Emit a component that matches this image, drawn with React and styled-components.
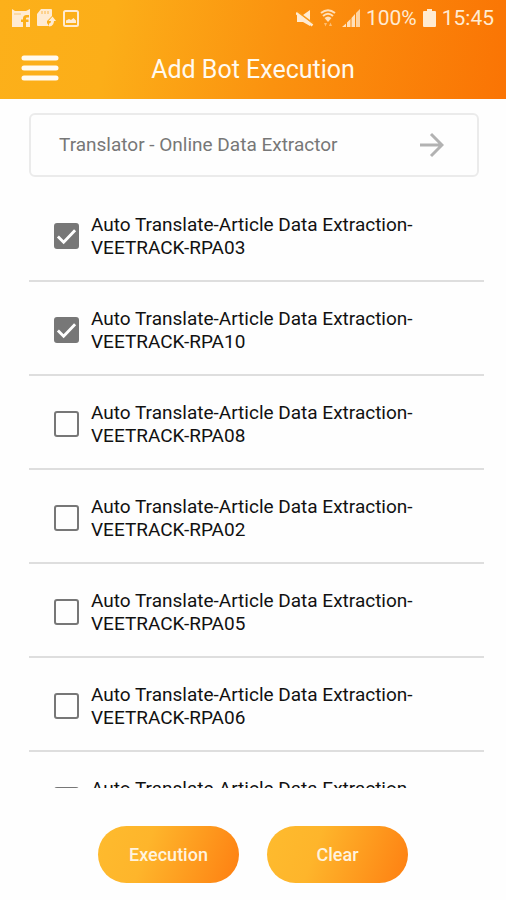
import React, { Component } from 'react'
import styled, { createGlobalStyle } from 'styled-components'

const GlobalStyle = createGlobalStyle`
  * {
    box-sizing: border-box;
  }
  body {
    margin: 0;
    background: #fefefe;
    font-family: Roboto, "Liberation Sans", sans-serif;
  }
  button, input {
    font-family: inherit;
  }
`

const Screen = styled.div`
  display: flex;
  flex-direction: column;
  height: 100vh;
`

const Header = styled.header`
  flex: none;
  background: linear-gradient(100deg, #fcb01a 0%, #fcae18 22%, #fb920f 55%, #fa7404 100%);
`

const StatusBar = styled.div`
  display: flex;
  align-items: center;
  justify-content: space-between;
  height: 36px;
  padding: 0 12px;
  color: #ffebd2;
  font-size: 21px;
  line-height: 24px;
`

const StatusGroup = styled.div`
  display: flex;
  align-items: center;
  gap: ${props => props.$gap}px;
`

const TitleBar = styled.div`
  display: grid;
  grid-template-columns: 60px 1fr 60px;
  align-items: center;
  height: 63px;
`

const MenuButton = styled.button`
  display: flex;
  padding: 0 0 0 21px;
  border: 0;
  background: none;
  cursor: pointer;
`

const Title = styled.h1`
  margin: 0;
  padding-top: 4px;
  color: #fffaf0;
  font-size: 25px;
  font-weight: 400;
  line-height: 32px;
  text-align: center;
`

const BotPicker = styled.button`
  display: flex;
  flex: none;
  align-items: center;
  justify-content: space-between;
  height: 64px;
  margin: 14px 27px 0 29px;
  padding: 0 33px 0 28px;
  border: 2px solid #ebebeb;
  border-radius: 6px;
  background: #fefefe;
  color: #777;
  font-size: 19px;
  line-height: 24px;
  cursor: pointer;
`

const BotList = styled.ul`
  flex: 1;
  min-height: 0;
  margin: 11px 22px 0 29px;
  padding: 0;
  overflow-y: auto;
  scrollbar-width: none;
  list-style: none;
`

const BotRow = styled.li`
  height: 94px;
  border-bottom: 2px solid #dedede;
`

const BotLabel = styled.label`
  display: flex;
  align-items: center;
  gap: 12px;
  height: 100%;
  padding: 4px 60px 0 25px;
  color: #111;
  font-size: 19px;
  line-height: 23px;
  cursor: pointer;
`

const Checkbox = styled.input`
  appearance: none;
  flex: none;
  width: 25px;
  height: 26px;
  margin: 0;
  border: 2px solid #777;
  border-radius: 3px;
  cursor: pointer;

  &:checked {
    background: #777
      url("data:image/svg+xml,%3Csvg xmlns='http://www.w3.org/2000/svg' viewBox='0 0 22 22'%3E%3Cpath d='M2 11 8 17 20 4.5' fill='none' stroke='white' stroke-width='3'/%3E%3C/svg%3E")
      center / 100% no-repeat;
  }
`

const Footer = styled.footer`
  display: flex;
  flex: none;
  justify-content: center;
  gap: 28px;
  padding: 38px 0 17px;
`

const ActionButton = styled.button`
  width: 141px;
  height: 57px;
  border: 0;
  border-radius: 29px;
  background: linear-gradient(110deg, #febb2e 0%, #feb52b 35%, #fe9a1e 68%, #fe7f12 100%);
  color: #fff3df;
  font-size: 18px;
  font-weight: 500;
  cursor: pointer;
`

const FlipboardIcon = () => (
  <svg width="18" height="18" viewBox="0 0 18 18" aria-hidden="true">
    <path
      fill="#ffebd2"
      fillRule="evenodd"
      d="M0 0 3 2H14L18 0V18H14V13H16.5V10.500H14V9.500Q14 8.500 15 8.500H17V6H14.500Q11 6 11 9.500V10.500H9V13H11V18H0Z"
    />
    <path d="M2 5H9" stroke="#fbc873" strokeWidth="1" />
  </svg>
)

const SdCardIcon = () => (
  <svg width="19" height="18" viewBox="0 0 19 18" aria-hidden="true">
    <path fill="#ffebd2" d="M4 0H14Q15 0 15 1V7L10 12V14L12 17H1Q0 17 0 16V5Z" />
    <path d="M5 2V5M8 2V5M11 2V5" stroke="#fbb84a" strokeWidth="1" />
    <path d="M12 16Q16 16 15.500 10" fill="none" stroke="#ffebd2" strokeWidth="3" />
    <path d="M11.500 12 15.500 7.500 19 12Z" fill="#ffebd2" />
  </svg>
)

const ImageIcon = () => (
  <svg width="16" height="17" viewBox="0 0 16 17" aria-hidden="true">
    <rect x="1" y="1" width="14" height="15" rx="1.5" fill="none" stroke="#ffebd2" strokeWidth="2" />
    <path fill="#ffebd2" d="M3 13V10.500L6 9 8 10 10.500 8 13 10.500V13Z" />
  </svg>
)

const MutedIcon = () => (
  <svg width="18" height="17" viewBox="0 0 18 17" aria-hidden="true">
    <path fill="#ffebd2" d="M1 5H7L14 0V16L7 12H1Z" />
    <path d="M1 1.500 17 13.500" stroke="#fa9a18" strokeWidth="2" />
    <path d="M0 3 16.500 15.500" stroke="#ffebd2" strokeWidth="2.5" />
  </svg>
)

const WifiIcon = () => (
  <svg width="16" height="18" viewBox="0 0 16 18" aria-hidden="true">
    <g fill="none" stroke="#ffdfb8" strokeWidth="2">
      <path d="M1 4Q8 -1.500 15 4" />
      <path d="M3 7Q8 2.500 13 7" />
    </g>
    <path fill="#ffdfb8" d="M4.500 9Q8 6 11.500 9L8 13Z" />
    <path fill="#ffdfb8" fillOpacity="0.6" d="M4 14H7L5.500 17.500ZM9 17H12L10.500 13.500Z" />
  </svg>
)

const SignalIcon = () => (
  <svg width="18" height="18" viewBox="0 0 18 18" aria-hidden="true">
    <g fill="#ffe0bb">
      <path d="M0 18 4 14.500V18ZM5 13.500 8.500 10V18H5ZM9.500 9 13 5V18H9.500Z" />
      <path d="M14 4 18 0V18H14Z" fillOpacity="0.85" />
    </g>
  </svg>
)

const BatteryIcon = () => (
  <svg width="13" height="18" viewBox="0 0 13 18" aria-hidden="true">
    <path fill="#ffebd2" d="M4 0H9V2H12Q13 2 13 3V17Q13 18 12 18H1Q0 18 0 17V3Q0 2 1 2H4Z" />
  </svg>
)

const MenuIcon = () => (
  <svg width="38" height="26" viewBox="0 0 38 26" aria-hidden="true">
    <path d="M3 3H35M3 13H35M3 23H35" stroke="#fffaf0" strokeWidth="5" strokeLinecap="round" />
  </svg>
)

const ArrowIcon = () => (
  <svg width="25" height="26" viewBox="0 0 25 26" aria-hidden="true">
    <path d="M1 13H22M12 2 23 13 12 24" fill="none" stroke="#b2b2b2" strokeWidth="3" />
  </svg>
)

const robots = ['RPA03', 'RPA10', 'RPA08', 'RPA02', 'RPA05', 'RPA06', 'RPA07']

class App extends Component {
  constructor() {
    super()
    this.state = {
      selected: ['RPA03', 'RPA10']
    }
  }

  toggle(id) {
    const { selected } = this.state
    this.setState({
      selected: selected.includes(id)
        ? selected.filter(item => item !== id)
        : [...selected, id]
    })
  }

  clear() {
    this.setState({ selected: [] })
  }

  render() {
    const { selected } = this.state
    return (
      <Screen>
        <GlobalStyle />
        <Header>
          <StatusBar>
            <StatusGroup $gap={7}>
              <FlipboardIcon />
              <SdCardIcon />
              <ImageIcon />
            </StatusGroup>
            <StatusGroup $gap={6}>
              <MutedIcon />
              <WifiIcon />
              <SignalIcon />
              <span>100%</span>
              <BatteryIcon />
              <span>15:45</span>
            </StatusGroup>
          </StatusBar>
          <TitleBar>
            <MenuButton type="button" aria-label="Menu">
              <MenuIcon />
            </MenuButton>
            <Title>Add Bot Execution</Title>
          </TitleBar>
        </Header>

        <BotPicker type="button">
          <span>Translator - Online Data Extractor</span>
          <ArrowIcon />
        </BotPicker>

        <BotList>
          {robots.map(id => (
            <BotRow key={id}>
              <BotLabel>
                <Checkbox
                  type="checkbox"
                  checked={selected.includes(id)}
                  onChange={() => this.toggle(id)}
                />
                <span>
                  Auto Translate-Article Data Extraction-
                  <br />
                  VEETRACK-{id}
                </span>
              </BotLabel>
            </BotRow>
          ))}
        </BotList>

        <Footer>
          <ActionButton type="button">Execution</ActionButton>
          <ActionButton type="button" onClick={() => this.clear()}>
            Clear
          </ActionButton>
        </Footer>
      </Screen>
    )
  }
}

export default App
